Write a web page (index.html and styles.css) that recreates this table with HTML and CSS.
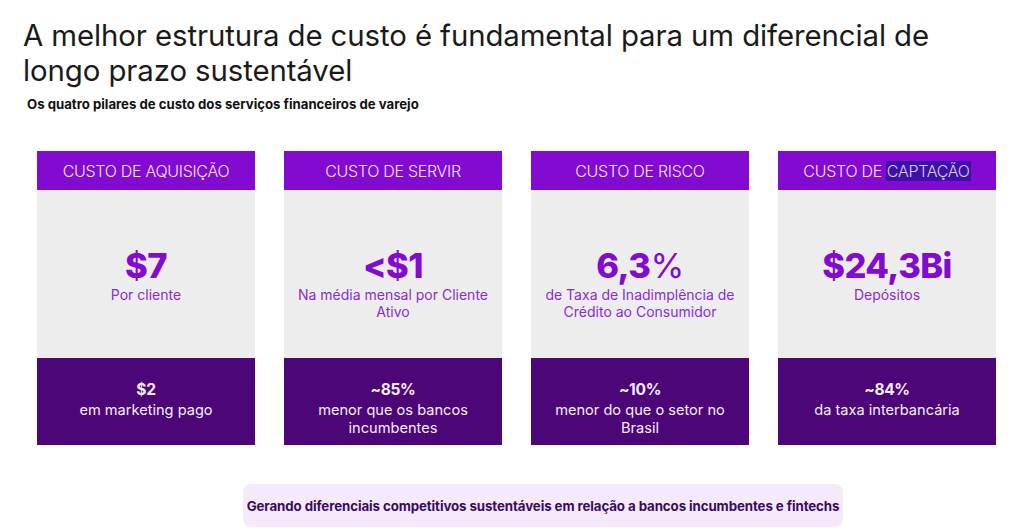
FILE: index.html
```html
<!DOCTYPE html>
<html lang="pt-BR">
<head>
<meta charset="utf-8">
<title>Estrutura de custo</title>
<link rel="stylesheet" href="styles.css">
</head>
<body>
<div class="page">
  <h1 class="title">A melhor estrutura de custo é fundamental para um diferencial de longo prazo sustentável</h1>
  <p class="subtitle">Os quatro pilares de custo dos serviços financeiros de varejo</p>

  <div class="cards">
    <div class="card">
      <div class="card-head">CUSTO DE AQUISIÇÃO</div>
      <div class="card-body">
        <div class="big">$7</div>
        <div class="desc">Por cliente</div>
      </div>
      <div class="card-foot">
        <div class="foot-num">$2</div>
        <div class="foot-text">em marketing pago</div>
      </div>
    </div>
    <div class="card">
      <div class="card-head">CUSTO DE SERVIR</div>
      <div class="card-body">
        <div class="big">&lt;$1</div>
        <div class="desc">Na média mensal por Cliente Ativo</div>
      </div>
      <div class="card-foot">
        <div class="foot-num">~85%</div>
        <div class="foot-text">menor que os bancos incumbentes</div>
      </div>
    </div>
    <div class="card">
      <div class="card-head">CUSTO DE RISCO</div>
      <div class="card-body">
        <div class="big">6,3<span class="pct">%</span></div>
        <div class="desc">de Taxa de Inadimplência de Crédito ao Consumidor</div>
      </div>
      <div class="card-foot">
        <div class="foot-num">~10%</div>
        <div class="foot-text">menor do que o setor no Brasil</div>
      </div>
    </div>
    <div class="card">
      <div class="card-head">CUSTO DE <span class="selected">CAPTAÇÃO</span></div>
      <div class="card-body">
        <div class="big">$24,3Bi</div>
        <div class="desc">Depósitos</div>
      </div>
      <div class="card-foot">
        <div class="foot-num">~84%</div>
        <div class="foot-text">da taxa interbancária</div>
      </div>
    </div>
  </div>

  <div class="banner-row">
    <div class="banner">Gerando diferenciais competitivos sustentáveis em relação a bancos incumbentes e fintechs</div>
  </div>
</div>
</body>
</html>
```

FILE: styles.css
```css
* { box-sizing: border-box; }
html, body { margin: 0; padding: 0; background: #ffffff; }
body {
  font-family: "Inter", "Liberation Sans", sans-serif;
  color: #111111;
  width: 1031px;
  height: 531px;
  overflow: hidden;
}
.page {
  padding: 18px 0 0 23px;
}
.title {
  margin: 0;
  width: 960px;
  font-size: 29.4px;
  font-weight: 400;
  line-height: 35px;
  letter-spacing: -0.1px;
  color: #1a1a1a;
}
.subtitle {
  margin: 8px 0 0 4px;
  font-size: 13.2px;
  font-weight: 700;
  color: #111111;
  line-height: 16px;
}
.cards {
  display: flex;
  gap: 29px;
  margin: 39px 0 0 14px;
  align-items: flex-start;
}
.card {
  width: 218px;
  display: flex;
  flex-direction: column;
}
.card-head {
  height: 39px;
  background: #820ad1;
  color: #f4e6ff;
  font-size: 16px;
  font-weight: 300;
  letter-spacing: -0.3px;
  display: flex;
  align-items: center;
  justify-content: center;
}
.selected {
  background: #3f10a8;
  color: #cfd4ff;
  margin-left: 4px;
  padding: 0 1px;
}
.card-body {
  height: 168px;
  background: #ededed;
  padding: 58px 8px 0;
  text-align: center;
}
.big {
  font-size: 34.5px;
  font-weight: 800;
  line-height: 36px;
  color: #820ad1;
  letter-spacing: -0.6px;
}
.pct { font-weight: 400; }
.desc {
  margin-top: 2px;
  font-size: 14px;
  line-height: 17px;
  color: #8a2dcc;
}
.card-foot {
  height: 87px;
  background: #4c0677;
  color: #f5eefa;
  padding: 22px 10px 0;
  text-align: center;
}
.foot-num {
  font-size: 15.5px;
  font-weight: 700;
  line-height: 20px;
  letter-spacing: -0.3px;
}
.foot-text {
  margin-top: 1px;
  font-size: 14.6px;
  line-height: 18px;
}
.banner-row {
  display: flex;
  margin: 39px 0 0 220px;
}
.banner {
  width: 600px;
  height: 43px;
  background: #f4eafc;
  border-radius: 8px;
  display: flex;
  align-items: center;
  justify-content: center;
  font-size: 13.3px;
  font-weight: 700;
  color: #3d0a5e;
  letter-spacing: -0.1px;
}
```
